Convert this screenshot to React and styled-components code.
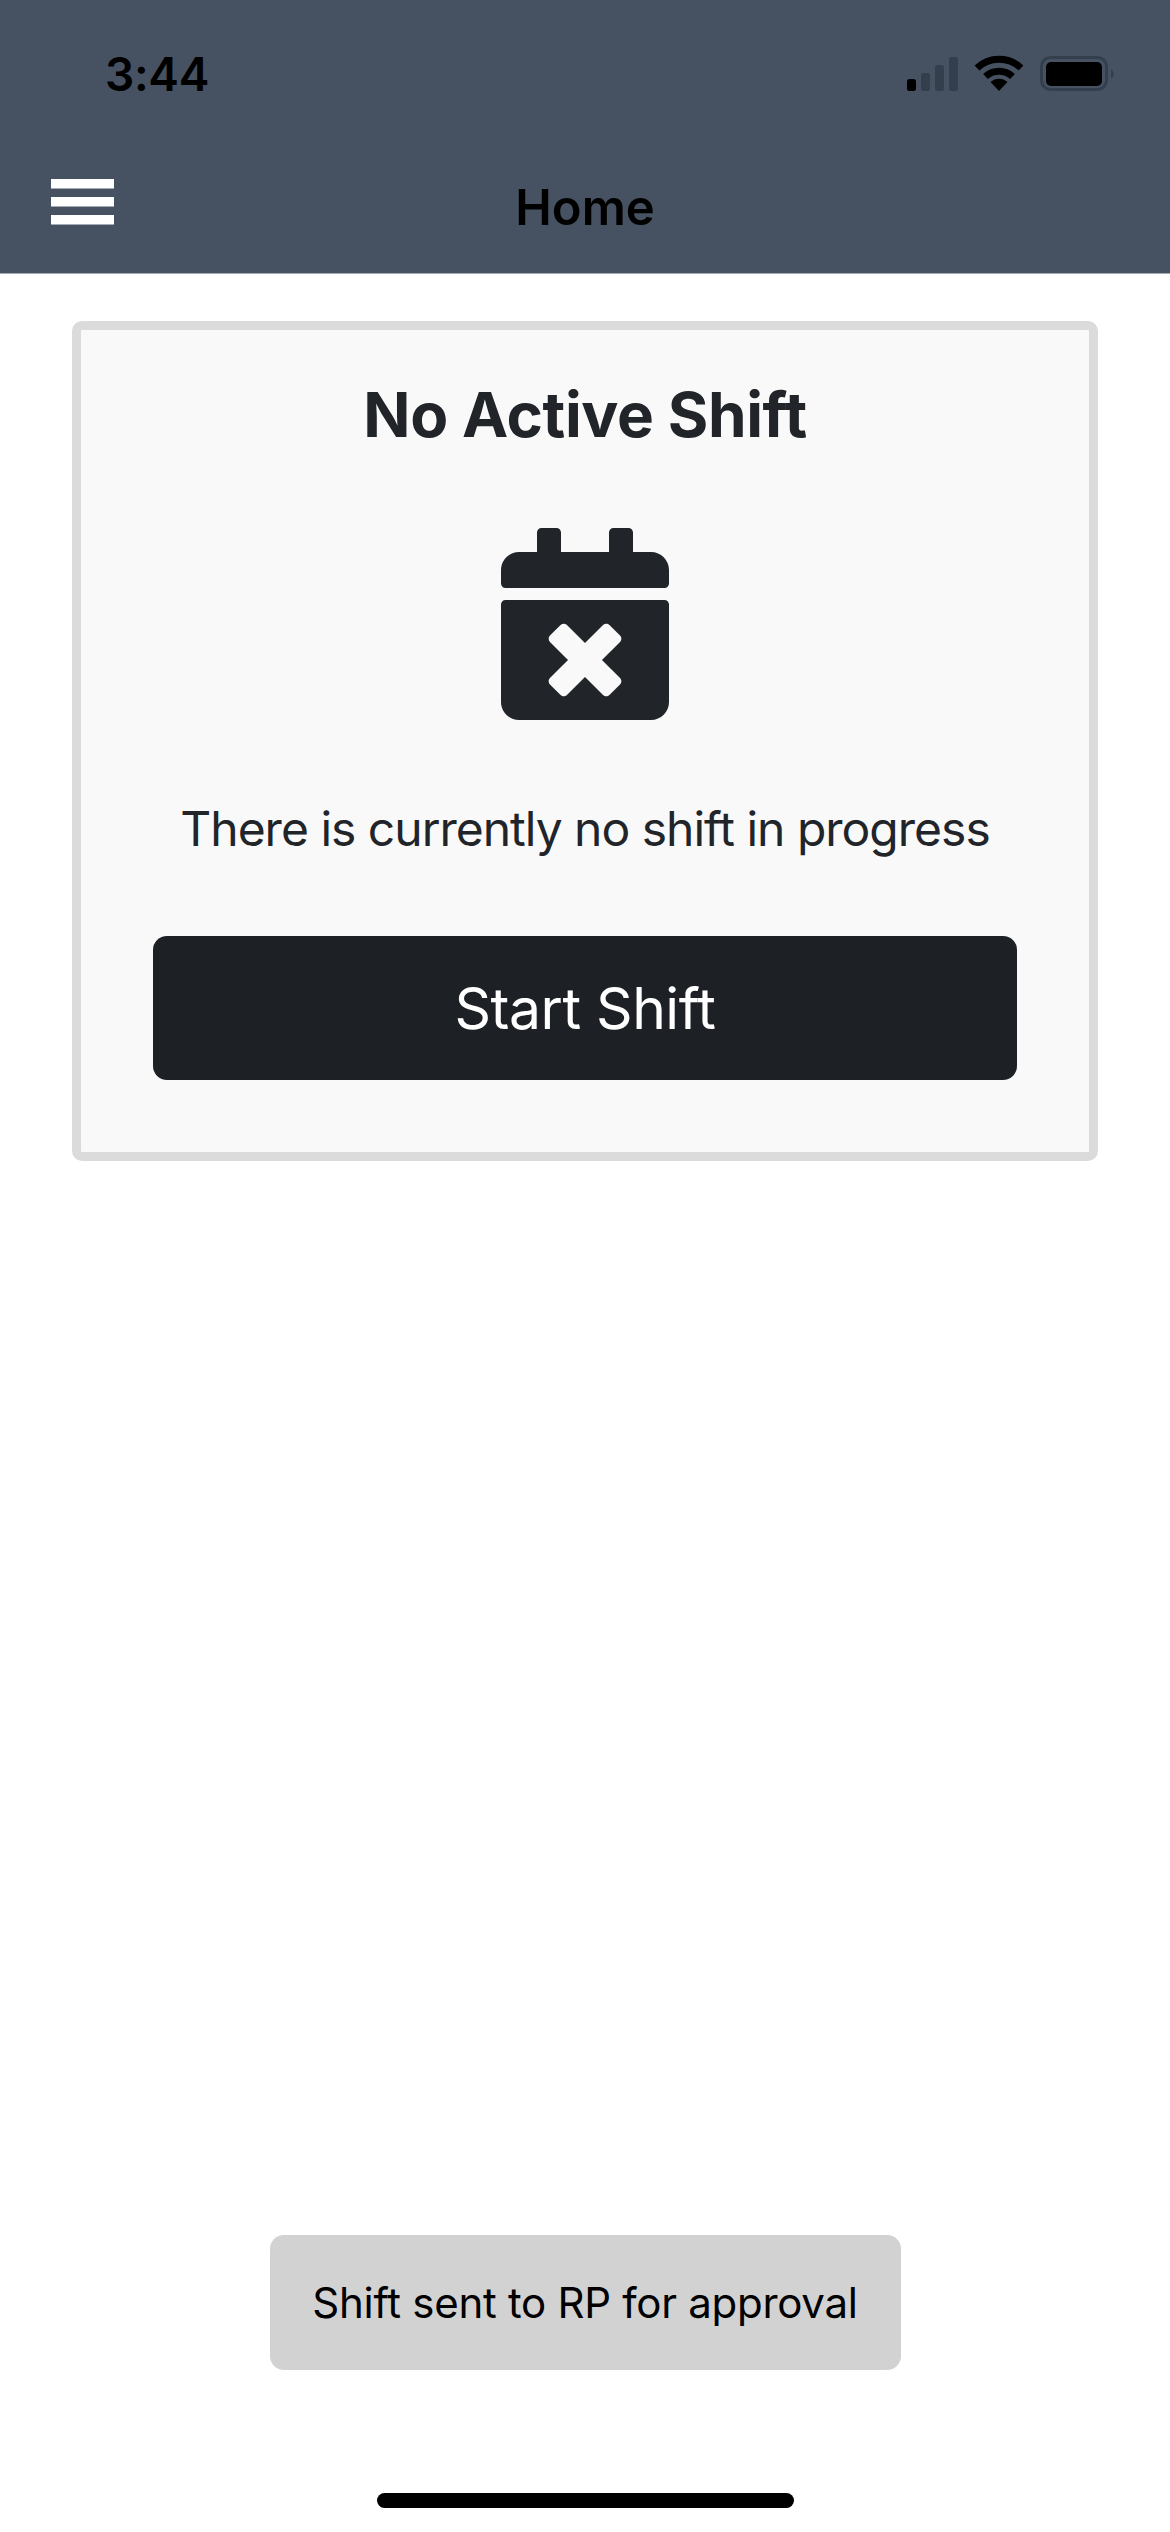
import React from "react";
import styled, { createGlobalStyle } from "styled-components";
import { FaCalendarTimes } from "react-icons/fa";

const Global = createGlobalStyle`
  html, body { margin: 0; padding: 0; background: #fff; }
  * { box-sizing: border-box; }
  body { font-family: Inter, "Noto Sans", "Liberation Sans", sans-serif; }
`;

const Page = styled.div`
  width: 1170px;
  height: 2532px;
  display: flex;
  flex-direction: column;
  overflow: hidden;
  background: #fff;
`;

const Header = styled.header`
  height: 274px;
  flex: none;
  background: #465261;
  border-bottom: 1px solid #a4abb4;
  display: flex;
  flex-direction: column;
`;

const StatusBar = styled.div`
  height: 172px;
  padding: 55px 55px 0 105px;
  display: flex;
  justify-content: space-between;
  align-items: flex-start;
`;

const Time = styled.span`
  font-size: 46px;
  line-height: 38px;
  font-weight: 600;
  letter-spacing: -0.3px;
  color: #000;
`;

const StatusIcons = styled.svg`
  display: block;
  width: 208px;
  height: 36px;
  margin-top: 0;
`;

const NavBar = styled.nav`
  display: grid;
  grid-template-columns: 1fr auto 1fr;
  align-items: flex-start;
  padding: 7px 51px 0;
`;

const Burger = styled.button`
  all: unset;
  display: flex;
  flex-direction: column;
  gap: 8px;
  width: 63px;
`;

const BurgerBar = styled.span`
  display: block;
  height: 10px;
  background: #fff;
  border-bottom: 1px solid #a4abb4;
`;

const Title = styled.h1`
  margin: 0;
  font-size: 49px;
  line-height: 58px;
  font-weight: 600;
  color: #000;
`;

const Main = styled.main`
  flex: 1;
  display: flex;
  flex-direction: column;
  padding: 47px 72px 0;
`;

const Card = styled.section`
  height: 840px;
  background: #f9f9f9;
  border: 9px solid #dbdbdb;
  border-radius: 10px;
  display: flex;
  flex-direction: column;
  align-items: center;
  padding: 45px 72px 0;
`;

const CardTitle = styled.h2`
  margin: 0;
  font-size: 62px;
  line-height: 80px;
  font-weight: 700;
  letter-spacing: -0.4px;
  color: #212529;
`;

const Icon = styled(FaCalendarTimes)`
  display: block;
  width: 168px;
  height: 192px;
  margin-top: 73px;
  color: #212529;
`;

const Message = styled.p`
  margin: 73px 0 0;
  font-size: 48px;
  line-height: 72px;
  font-weight: 400;
  letter-spacing: -1px;
  white-space: nowrap;
  color: #212529;
`;

const StartButton = styled.button`
  width: 100%;
  height: 144px;
  margin-top: 71px;
  border: 0;
  border-radius: 14px;
  background: #1d2125;
  color: #fff;
  font-family: inherit;
  font-size: 57px;
  font-weight: 400;
  letter-spacing: -0.5px;
`;

const Toast = styled.div`
  align-self: center;
  width: 631px;
  height: 135px;
  margin-top: auto;
  border-radius: 14px;
  background: #d2d2d2;
  display: flex;
  align-items: center;
  justify-content: center;
  font-size: 42px;
  letter-spacing: -0.28px;
  color: #000;
`;

const HomeBarZone = styled.div`
  height: 162px;
  flex: none;
  display: flex;
  justify-content: center;
  padding-top: 123px;
`;

const HomeIndicator = styled.div`
  width: 417px;
  height: 15px;
  border-radius: 8px;
  background: #000;
`;

export default function App() {
  return (
    <Page>
      <Global />
      <Header>
        <StatusBar>
          <Time>3:44</Time>
          <StatusIcons viewBox="907 55 208 36" aria-hidden="true">
            <rect x="907" y="79" width="9" height="12" rx="2.5" fill="#000" />
            <rect x="921" y="73" width="9" height="18" rx="2.5" fill="#343f4d" />
            <rect x="935" y="65" width="9" height="26" rx="2.5" fill="#343f4d" />
            <rect x="949" y="57" width="9" height="34" rx="2.5" fill="#343f4d" />
            <path d="M977 68 A32 32 0 0 1 1021 68" fill="none" stroke="#000" strokeWidth="7" />
            <path d="M985.5 76.5 A20 20 0 0 1 1012.5 76.5" fill="none" stroke="#000" strokeWidth="7" />
            <path d="M990.5 82 A12.5 12.5 0 0 1 1007.5 82 L999 91 Z" fill="#000" />
            <rect x="1041.5" y="57.5" width="65" height="32" rx="9" fill="none" stroke="#343f4d" strokeWidth="3" />
            <rect x="1046" y="62" width="56" height="24" rx="5" fill="#000" />
            <path d="M1111 69 A6 6 0 0 1 1111 79 Z" fill="#343f4d" />
          </StatusIcons>
        </StatusBar>
        <NavBar>
          <Burger aria-label="Menu">
            <BurgerBar />
            <BurgerBar />
            <BurgerBar />
          </Burger>
          <Title>Home</Title>
        </NavBar>
      </Header>
      <Main>
        <Card>
          <CardTitle>No Active Shift</CardTitle>
          <Icon />
          <Message>There is currently no shift in progress</Message>
          <StartButton>Start Shift</StartButton>
        </Card>
        <Toast>Shift sent to RP for approval</Toast>
      </Main>
      <HomeBarZone>
        <HomeIndicator />
      </HomeBarZone>
    </Page>
  );
}
